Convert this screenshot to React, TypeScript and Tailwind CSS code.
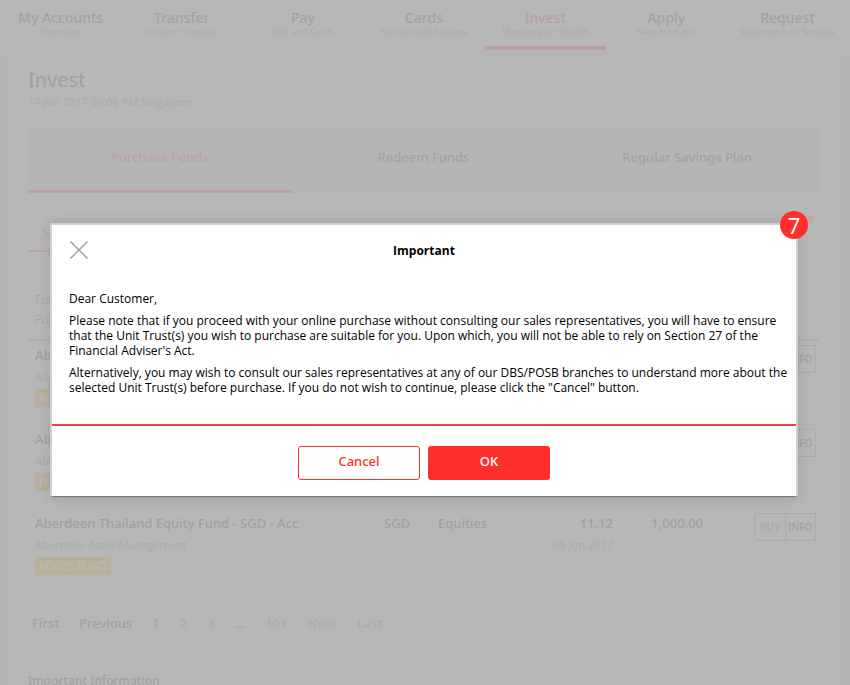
import React from 'react';

const navItems = [
  { title: 'My Accounts', subtitle: 'Summary' },
  { title: 'Transfer', subtitle: 'Local or Overseas' },
  { title: 'Pay', subtitle: 'Bills and Cards' },
  { title: 'Cards', subtitle: 'Activate and Manage' },
  { title: 'Invest', subtitle: 'Manage your Wealth', active: true },
  { title: 'Apply', subtitle: 'New Accounts' },
  { title: 'Request', subtitle: 'Statements or Services' },
];

const tabs = ['Purchase Funds', 'Redeem Funds', 'Regular Savings Plan'];

const funds = [
  { id: 1, name: 'Aberdeen Global Fund - SGD', price: '10.25', date: '05 Jun 2017' },
  { id: 2, name: 'Aberdeen Pacific Fund - SGD', price: '12.40', date: '05 Jun 2017' },
  { id: 3, name: 'Aberdeen Thailand Equity Fund - SGD - Acc', price: '11.12', date: '05 Jun 2017' },
];

const TopNav: React.FC = () => (
  <nav className="mr-0.5 grid h-[50px] grid-cols-7 text-center">
    {navItems.map((item) => (
      <a
        key={item.title}
        href="#"
        className={`block whitespace-nowrap border-b-4 pt-2 ${
          item.active ? 'border-[#b9a0a0] text-[#b69f9f]' : 'border-transparent text-[#a2a2a2]'
        }`}
      >
        <span className="block font-['Noto_Sans'] text-[14px] font-medium leading-5">{item.title}</span>
        <span className="block text-[9px] leading-2 text-[#ababab]">{item.subtitle}</span>
      </a>
    ))}
  </nav>
);

const Tabs: React.FC = () => (
  <div className="mt-[18px] grid h-[65px] grid-cols-3 bg-[#b5b5b5]">
    {tabs.map((tab, index) => (
      <button
        key={tab}
        type="button"
        className={`border-b-[3px] pb-0.5 font-['Noto_Sans'] text-[13px] font-medium ${
          index === 0 ? 'border-[#bba3a3] text-[#bba3a3]' : 'border-transparent text-[#a2a2a2]'
        }`}
      >
        {tab}
      </button>
    ))}
  </div>
);

const FundTable: React.FC = () => (
  <table className="w-full table-fixed border-t-2 border-[#bea9a9] text-left font-['Noto_Sans'] text-[13px] leading-5 text-[#a0a0a0]">
    <colgroup>
      <col />
      <col className="w-[54px]" />
      <col className="w-[82px]" />
      <col className="w-[93px]" />
      <col className="w-[90px]" />
      <col className="w-[116px]" />
    </colgroup>
    <tbody>
      {funds.map((fund) => (
        <tr key={fund.id} className="h-[84px] border-b border-[#b3b3b3] align-top last:h-[89px]">
          <td className="pl-[7px] pt-1">
            <div className="font-medium">{fund.name}</div>
            <div className="mt-1 font-['Open_Sans'] text-[11px] leading-4 text-[#aaaaaa]">Aberdeen Asset Management</div>
            <span className="mt-1 inline-block bg-[#b9af9d] px-1 font-['Open_Sans'] text-[11px] leading-[18px] text-[#c1bcb2]">
              FOCUS FUND
            </span>
          </td>
          <td className="pt-1 font-medium">SGD</td>
          <td className="pt-1 font-medium">Equities</td>
          <td className="pt-1 text-right font-medium">
            {fund.price}
            <div className="mt-1 font-['Open_Sans'] text-[11px] font-normal leading-4 text-[#aaaaaa]">{fund.date}</div>
          </td>
          <td className="pt-1 text-right font-medium">1,000.00</td>
          <td className="pr-[3px] pt-1">
            <div className="ml-auto flex h-7 w-[62px] rounded-l-sm border border-[#ababab] text-[10px] font-medium">
              <button type="button" className="flex-1 border-r border-[#ababab] text-[#a2ada2]">
                BUY
              </button>
              <button type="button" className="flex-1">
                INFO
              </button>
            </div>
          </td>
        </tr>
      ))}
    </tbody>
  </table>
);

const Pagination: React.FC = () => (
  <div className="mt-[13px] flex pl-1 font-['Noto_Sans'] text-[13px] font-medium leading-6 text-[#a2a2a2]">
    <a href="#" className="mr-5">First</a>
    <a href="#" className="mr-5">Previous</a>
    <a href="#" className="mr-5 text-[#b89c9c]">1</a>
    <a href="#" className="mr-5 text-[#acacac]">2</a>
    <a href="#" className="mr-5 text-[#acacac]">3</a>
    <span className="mr-5">...</span>
    <a href="#" className="mr-5 text-[#acacac]">101</a>
    <a href="#" className="mr-5 text-[#acacac]">Next</a>
    <a href="#" className="text-[#acacac]">Last</a>
  </div>
);

const ImportantDialog: React.FC = () => (
  <div className="absolute inset-0 pl-[50px] pr-[52px] pt-[223px]">
    <div
      role="dialog"
      aria-labelledby="dialog-title"
      className="relative border-2 border-b border-[#cfcfcf] border-b-[#777777] bg-white text-black shadow-[0_1px_12px_rgba(0,0,0,0.14)]"
    >
      <span className="absolute -right-3 -top-3.5 flex size-7 items-center justify-center rounded-full bg-[#ff302c] text-[22px] font-normal text-white">
        7
      </span>
      <div className="grid h-[50px] grid-cols-3 items-center px-[17px]">
        <button type="button" aria-label="Close" className="size-5">
          <svg viewBox="0 0 20 20" className="size-5" fill="none" stroke="#999999" strokeWidth="1.4">
            <path d="M1.5 1.5 18.5 18.5M18.5 1.5 1.5 18.5" />
          </svg>
        </button>
        <h2 id="dialog-title" className="pt-0.5 text-center text-[12px] font-bold">
          Important
        </h2>
      </div>
      <div className="space-y-[7px] whitespace-nowrap px-[17px] pb-[29px] pt-4 text-[12px] leading-[15px]">
        <p>Dear Customer,</p>
        <p>
          Please note that if you proceed with your online purchase without consulting our sales representatives, you will have to ensure
          <br />
          that the Unit Trust(s) you wish to purchase are suitable for you. Upon which, you will not be able to rely on Section 27 of the
          <br />
          Financial Adviser's Act.
        </p>
        <p>
          Alternatively, you may wish to consult our sales representatives at any of our DBS/POSB branches to understand more about the
          <br />
          selected Unit Trust(s) before purchase. If you do not wish to continue, please click the "Cancel" button.
        </p>
      </div>
      <div className="flex justify-center gap-2 border-t-2 border-[#f8403c] pb-4 pt-5 font-['Noto_Sans'] text-[13px] font-medium">
        <button type="button" className="h-[34px] w-[122px] rounded-[3px] border border-[#ff302c] pb-0.5 text-[#ff302c]">
          Cancel
        </button>
        <button type="button" className="h-[34px] w-[122px] rounded-[3px] bg-[#ff302c] pb-0.5 text-white">
          OK
        </button>
      </div>
    </div>
  </div>
);

const App: React.FC = () => {
  return (
    <div className="relative h-screen overflow-hidden bg-[#b5b5b5] font-['Open_Sans','Noto_Sans',sans-serif]">
      <div className="bg-[#b7b7b7]">
        <TopNav />
      </div>
      <main className="ml-2 mr-2.5 mt-1.5 bg-[#b7b7b7] pb-10 pl-5 pr-[21px] pt-3">
        <h1 className="font-['Noto_Sans'] text-[20px] leading-6 text-[#a0a0a0]">Invest</h1>
        <p className="mt-0.5 text-[11px] leading-4 text-[#aaaaaa]">14 Jun 2017 05:06 PM Singapore</p>
        <Tabs />
        <div className="mt-[23px] flex h-9 items-start justify-between">
          <button type="button" className="h-9 border-b-2 border-[#bea3a3] px-3.5 text-[13px] text-[#bba3a3]">
            Search
          </button>
          <svg viewBox="0 0 10 8" className="mr-1 h-2 w-2.5" fill="#bfa8a8">
            <path d="M0 0H10L5 8Z" />
          </svg>
        </div>
        <div className="h-[87px] pl-[7px] pt-[38px] text-[12px] leading-5 text-[#a8a8a8]">
          <p>Fund Type</p>
          <p>Fund House</p>
        </div>
        <FundTable />
        <Pagination />
        <h2 className="mt-9 font-['Noto_Sans'] text-[12px] font-medium leading-5 text-[#a0a0a0]">Important Information</h2>
      </main>
      <ImportantDialog />
    </div>
  );
};

export default App;
